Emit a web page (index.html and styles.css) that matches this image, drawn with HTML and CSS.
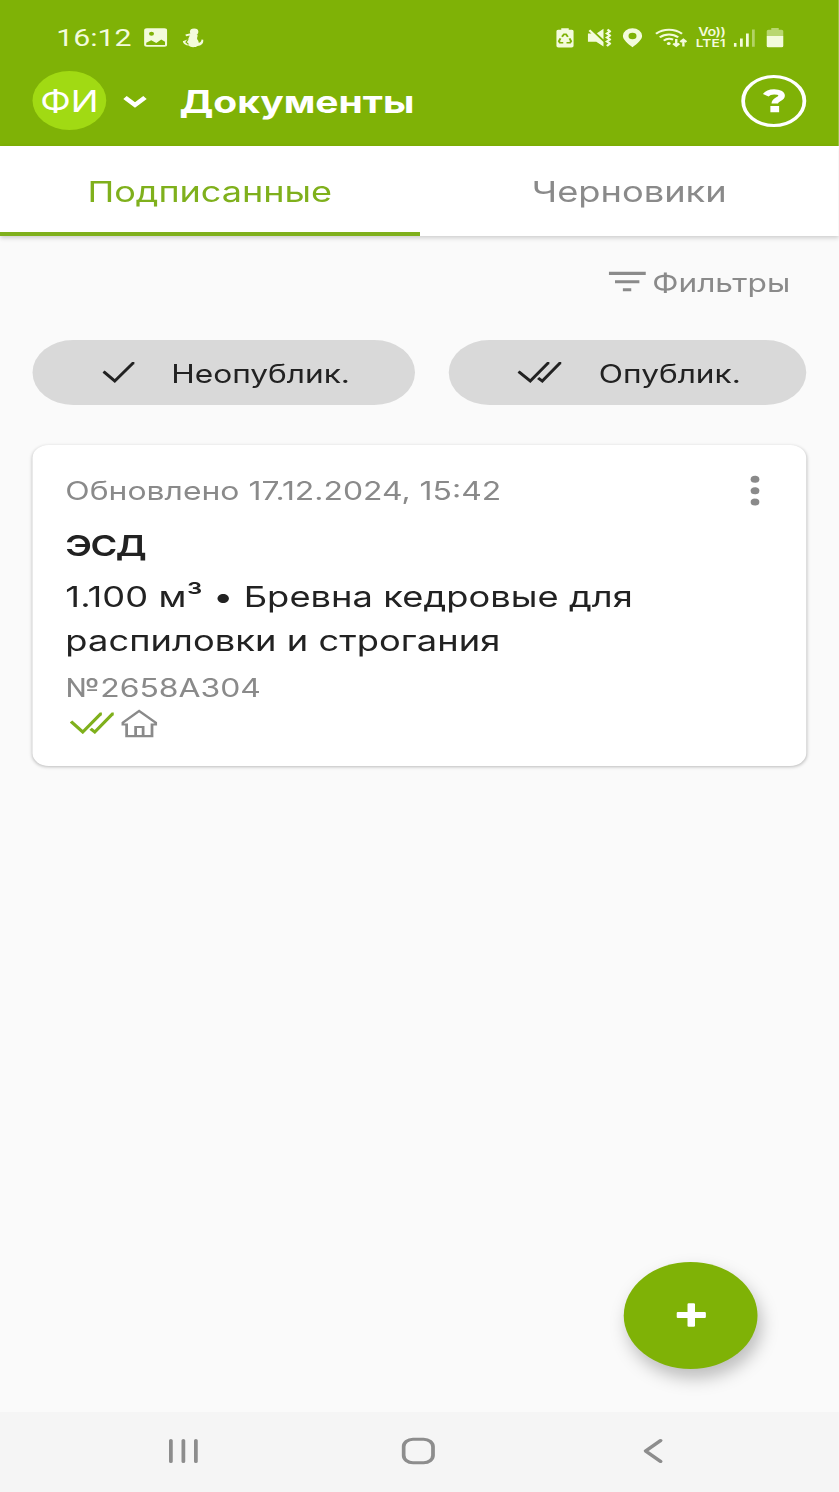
FILE: index.html
```html
<!DOCTYPE html>
<html lang="ru">
<head>
    <meta charset="UTF-8">
    <meta name="viewport" content="width=device-width, initial-scale=1.0">
    <title>Документы</title>
    <link rel="stylesheet" href="styles.css">
</head>
<body>
    <div class="screen">
        <header class="header">
            <div class="status">
                <span class="time">16:12</span>
                <svg class="st-image" width="19" height="20" viewBox="0 0 19 20">
                    <path fill-rule="evenodd" d="M2.500 .3h14a2.200 2.200 0 0 1 2.200 2.200v14a2.200 2.200 0 0 1-2.200 2.200h-14a2.200 2.200 0 0 1-2.200-2.200v-14a2.200 2.200 0 0 1 2.200-2.200zM2 14.800v2.200h15v-3.200L14 11.500l-4 3.500-4-2.700z"/>
                    <circle class="hole" cx="6.200" cy="5.800" r="2"/>
                </svg>
                <svg class="st-bird" width="17" height="20" viewBox="0 0 17 20">
                    <circle cx="9.300" cy="3.800" r="3.400"/>
                    <path d="M2.300 6.500L7.500 5l4.300 1.500c1 2-1 3.200.4 5.500.8 1.200.6 2 .8 2.800 1.400-.2 2.100-1.200 2.200-3.300l1.500.3c.2 4-2 6-4.700 6.200-.8.800-2 1.200-3.500 1.200-1.500 0-2.700-.6-3.500-1.600C2.500 17.500.5 15.800.2 13.300l4.300-2.100 1.300-3.700-3 .7z"/>
                    <path class="cut thin" d="M4.500 11.200l-1.700 3 2 2.200"/>
                </svg>
                <div class="status-right">
                    <svg width="14" height="20" viewBox="0 0 14 20">
                        <path d="M4 .3h6v1.500h2.500A1.500 1.500 0 0 1 14 3.300v14.500a1.800 1.800 0 0 1-1.800 1.800H1.800A1.800 1.800 0 0 1 0 17.800V3.300a1.500 1.500 0 0 1 1.500-1.500H4z"/>
                        <path class="cut" d="M4.600 8.800L6.200 6.300h1.600l1.500 2.500M10.600 10.300l1.300 2.900-.8 1.500H8.200M5.600 14.700H2.900l-.8-1.500 1.300-2.900"/>
                    </svg>
                    <svg class="st-mute" width="19" height="20" viewBox="0 0 19 20">
                        <path d="M.3 5.500h2.900L.8 3.100 2.200 1.500 12.800 14v4.600L7 13.700H.3zM7.500 5.300L12.800.8v10.700z"/>
                        <path class="line" d="M16 1.500l2 2-2.500 2 2.500 2-2.500 2 2.500 2-2.500 2 2.500 2-2.500 2.500"/>
                    </svg>
                    <svg class="st-pin" width="16" height="20" viewBox="0 0 16 20">
                        <path fill-rule="evenodd" d="M8 .3a7.700 7.700 0 0 1 7.700 7.700c0 3.500-3.700 7.500-7.700 11.200C4 15.500.3 11.500.3 8A7.700 7.700 0 0 1 8 .3zm0 4.500a3.200 3.200 0 1 0 0 6.400 3.200 3.200 0 0 0 0-6.400z"/>
                    </svg>
                    <svg class="st-wifi" width="26" height="20" viewBox="0 0 26 20">
                        <path class="line" d="M.8 5.800a15.500 15.500 0 0 1 20.800 0M3.800 9.400a11 11 0 0 1 14.800 0M7 12.600a6.500 6.500 0 0 1 7.500-1M17 11v7M14.600 15.500L17 18l2.400-2.500M22.700 18.500v-7M20.300 14l2.400-2.500 2.400 2.500"/>
                        <circle cx="11" cy="15.500" r="1.500"/>
                    </svg>
                    <div class="volte"><span class="vo">Vo))</span><span>LTE1</span></div>
                    <svg class="st-signal" width="18" height="20" viewBox="0 0 18 20">
                        <path d="M0 15h2.200v3.700H0zM5 10.500h2.200v8.200H5zM9.800 5.500H12v13.200H9.800z"/>
                        <path opacity=".45" d="M14.600 1.500h2.200v17.200h-2.200z"/>
                    </svg>
                    <svg class="st-battery" width="14" height="20" viewBox="0 0 14 20">
                        <path opacity=".5" d="M4 0h6v1.800h2.200A1.500 1.500 0 0 1 13.700 3.300V8H.3V3.300a1.500 1.500 0 0 1 1.500-1.500H4z"/>
                        <path d="M.3 8h13.400v9.800a1.500 1.500 0 0 1-1.500 1.500H1.800a1.500 1.500 0 0 1-1.500-1.500z"/>
                    </svg>
                </div>
            </div>
            <div class="toolbar">
                <div class="avatar">ФИ</div>
                <svg class="chevron" width="20" height="14" viewBox="0 0 20 14">
                    <path d="M2 2.500l8 7.500 8-7.500"/>
                </svg>
                <h1 class="title">Документы</h1>
                <div class="help">
                    <svg width="20" height="26" viewBox="0 0 20 26">
                        <path d="M2.600 7.300C4 4.800 6.500 3.800 9.300 3.800c3.800 0 6 1.500 6 4 0 3.500-5.500 3.300-5.500 7.700"/>
                        <path class="dot" d="M6.300 18h7v6.300h-7z"/>
                    </svg>
                </div>
            </div>
        </header>

        <nav class="tabs">
            <div class="tab active">Подписанные</div>
            <div class="tab">Черновики</div>
        </nav>

        <main class="content">
            <div class="filters">
                <svg width="30" height="22" viewBox="0 0 30 22">
                    <path d="M0 .7h29.600v3.200H0zM5 9.200h19.500v3H5zM11.300 17.200H18v3.100h-6.700z"/>
                </svg>
                <span>Фильтры</span>
            </div>

            <div class="chips">
                <div class="chip chip-unpublished">
                    <svg width="26" height="22" viewBox="0 0 26 22"><path d="M.8 9.500l9 9.500L24.500 1h1"/></svg>
                    <span>Неопублик.</span>
                </div>
                <div class="chip chip-published">
                    <svg width="36" height="22" viewBox="0 0 36 22"><path d="M.8 9.500L10.200 19 24.500 1h1M16.500 16l3.300 3L34 1h1"/></svg>
                    <span>Опублик.</span>
                </div>
            </div>

            <article class="card">
                <div class="card-top">
                    <span>Обновлено 17.12.2024, 15:42</span>
                    <svg class="more" width="8" height="32" viewBox="0 0 8 32">
                        <circle cx="4" cy="4.300" r="3.500"/>
                        <circle cx="4" cy="15.700" r="3.500"/>
                        <circle cx="4" cy="27.100" r="3.500"/>
                    </svg>
                </div>
                <h2 class="card-title">ЭСД</h2>
                <p class="card-text">1.100 м³ • Бревна кедровые для<br>распиловки и строгания</p>
                <div class="number">№2658А304</div>
                <div class="marks">
                    <svg class="mark-check" width="36" height="22" viewBox="0 0 36 22"><path d="M.8 9.500l9.400 10.500L24.500 2h1M16.500 16.800l3.300 3.200L34 2h1"/></svg>
                    <svg class="mark-home" width="29" height="29" viewBox="0 0 29 29"><path d="M4.300 15.500H1.200v-1.700L14.300 2l13.300 11.800v1.700h-3v11.700H4.300zM11.500 27v-9h6v9"/></svg>
                </div>
            </article>
        </main>

        <button class="fab">
            <svg width="24" height="24" viewBox="0 0 24 24"><path d="M9 1.300Q9 .3 10 .3h4q1 0 1 1V9h7.700q1 0 1 1v4q0 1-1 1H15v7.700q0 1-1 1h-4q-1 0-1-1V15H1.300q-1 0-1-1v-4q0-1 1-1H9z"/></svg>
        </button>

        <footer class="navbar">
            <svg width="26" height="28" viewBox="0 0 26 28"><path d="M2.700 3.500v21M12.700 3.500v21M22.700 3.500v21"/></svg>
            <svg class="nav-home" width="28" height="28" viewBox="0 0 28 28"><rect x="1.900" y="2.200" width="23.500" height="23.600" rx="7.500"/></svg>
            <svg width="18" height="28" viewBox="0 0 18 28"><path d="M15.500 3.500L3.500 14l12 10.500"/></svg>
        </footer>
    </div>
</body>
</html>
```
FILE: styles.css
```css
* {
    box-sizing: border-box;
}
html, body {
    margin: 0;
    height: 100%;
    overflow: hidden;
}
body {
    font-family: Inter, Roboto, "Liberation Sans", sans-serif;
    background-color: #fafafa;
    color: #222;
}
svg {
    display: block;
    flex: none;
}
/* the whole interface is stretched sideways */
.screen {
    display: flex;
    flex-direction: column;
    width: 671.2px;
    height: 1492px;
    position: relative;
    transform: scaleX(1.25);
    transform-origin: 0 0;
    white-space: nowrap;
}

.header {
    height: 146px;
    background-color: #7fb206;
    color: #fff;
}
.status {
    display: flex;
    align-items: center;
    height: 66px;
    padding: 9px 44.500px 0 45px;
    color: #f3fbdc;
}
.status svg {
    fill: #f3fbdc;
}
.status .line {
    fill: none;
    stroke: #f3fbdc;
    stroke-width: 1.900;
}
.status .cut {
    fill: none;
    stroke: #7fb206;
    stroke-width: 1.600;
}
.status .thin {
    stroke-width: 1;
}
.status .hole {
    fill: #7fb206;
}
.time {
    width: 70px;
    font-family: Roboto, sans-serif;
    font-size: 24.200px;
    line-height: 28px;
}
.st-bird {
    margin-left: 12px;
}
.status-right {
    display: flex;
    align-items: center;
    margin-left: auto;
}
.st-mute {
    margin-left: 10.500px;
}
.st-pin {
    margin-left: 9.500px;
}
.st-wifi {
    margin-left: 10px;
}
.volte {
    display: flex;
    flex-direction: column;
    width: 25px;
    margin-left: 6.500px;
    font-size: 11px;
    font-weight: 600;
    line-height: 11.500px;
}
.vo {
    padding: 1px 0 0 2px;
    font-size: 11.500px;
    letter-spacing: -.4px;
    line-height: 10.500px;
}
.st-signal {
    margin-left: 5px;
}
.st-battery {
    margin-left: 8px;
}
.toolbar {
    display: flex;
    align-items: center;
    height: 70px;
    padding: 0 26px;
}
.avatar {
    width: 59px;
    height: 59px;
    margin-top: -1px;
    border-radius: 50%;
    background-color: #a1da13;
    font-size: 29.500px;
    line-height: 61px;
    text-align: center;
}
.chevron {
    margin: 2px 0 0 13px;
    fill: none;
    stroke: #fff;
    stroke-width: 4;
}
.title {
    margin: 1px 0 0 25.500px;
    font-size: 31.200px;
    font-weight: 700;
    line-height: 40px;
}
.help {
    display: flex;
    align-items: center;
    justify-content: center;
    width: 52px;
    height: 52px;
    margin-left: auto;
    border: 3px solid #fff;
    border-radius: 50%;
}
.help svg {
    margin-left: 1px;
    fill: none;
    stroke: #fff;
    stroke-width: 5.200;
}
.help .dot {
    fill: #fff;
    stroke: none;
}

.tabs {
    display: flex;
    height: 90px;
    background-color: #fff;
    box-shadow: 0 2px 4px rgba(0, 0, 0, .18);
}
.tab {
    flex: 1;
    border-bottom: 4px solid transparent;
    color: #8a8a8a;
    font-size: 29px;
    line-height: 92px;
    text-align: center;
}
.tab.active {
    border-color: #7fb01c;
    color: #7fb01c;
    font-size: 28.800px;
}

.content {
    flex: 1;
    padding: 0 26px;
}
.filters {
    display: flex;
    align-items: center;
    justify-content: flex-end;
    height: 40px;
    margin-top: 26px;
    padding-right: 13px;
    color: #8a8a8a;
    font-size: 25.300px;
}
.filters svg {
    margin-right: 5px;
    fill: #8a8a8a;
}
.filters span {
    padding-top: 1px;
    line-height: 40px;
}

.chips {
    display: flex;
    gap: 26.300px;
    margin-top: 38px;
}
.chip {
    display: flex;
    align-items: center;
    height: 65px;
    border-radius: 33px;
    background-color: #d9d9d9;
    font-size: 25.300px;
    line-height: 66px;
}
.chip svg {
    fill: none;
    stroke: #222;
    stroke-width: 2.600;
}
.chip span {
    padding-top: 2px;
}
.chip-unpublished {
    width: 306.300px;
    padding-left: 55.500px;
}
.chip-published {
    flex: 1;
    padding-left: 55.500px;
}
.chip-unpublished span {
    margin-left: 29.500px;
}
.chip-published span {
    margin-left: 29px;
}

.card {
    height: 321px;
    margin-top: 40px;
    padding: 28px 37px 0 26.300px;
    border-radius: 13px;
    background-color: #fff;
    box-shadow: 0 1px 3px rgba(0, 0, 0, .25);
}
.card-top {
    display: flex;
    align-items: center;
    justify-content: space-between;
    height: 36px;
    color: #8a8a8a;
    font-size: 25.500px;
    line-height: 36px;
}
.more {
    fill: #8a8a8a;
}
.card-title {
    margin: 15px 0 0;
    font-size: 29px;
    font-weight: 600;
    letter-spacing: -1.200px;
    line-height: 44px;
}
.card-text {
    margin: 7px 0 0;
    font-size: 29px;
    letter-spacing: .05px;
    line-height: 43.600px;
}
.number {
    margin-top: 10.500px;
    color: #8a8a8a;
    font-size: 25.500px;
    line-height: 30px;
}
.marks {
    display: flex;
    align-items: center;
    margin: 6px 0 0 3.500px;
}
.marks svg {
    fill: none;
    stroke: #8a8a8a;
    stroke-width: 2.200;
}
.marks .mark-check {
    stroke: #7fb01c;
    stroke-width: 2.800;
}
.mark-home {
    margin-left: 5px;
}

/* floats over the list */
.fab {
    position: absolute;
    right: 65px;
    bottom: 123.500px;
    display: flex;
    align-items: center;
    justify-content: center;
    width: 107px;
    height: 107px;
    padding: 0;
    border: none;
    border-radius: 50%;
    background-color: #7fb206;
    box-shadow: 3px 9px 15px rgba(0, 0, 0, .25);
}
.fab svg {
    fill: #fff;
}

.navbar {
    display: flex;
    height: 80px;
    padding: 25px 0 0 134px;
    background-color: #f5f5f5;
}
.navbar svg {
    margin-right: 160.500px;
    fill: none;
    stroke: #8d8d8d;
    stroke-width: 3;
    stroke-linecap: round;
    stroke-linejoin: round;
}
.navbar svg.nav-home {
    margin-right: 164.500px;
}
.navbar svg:last-child {
    margin-right: 0;
}
```
